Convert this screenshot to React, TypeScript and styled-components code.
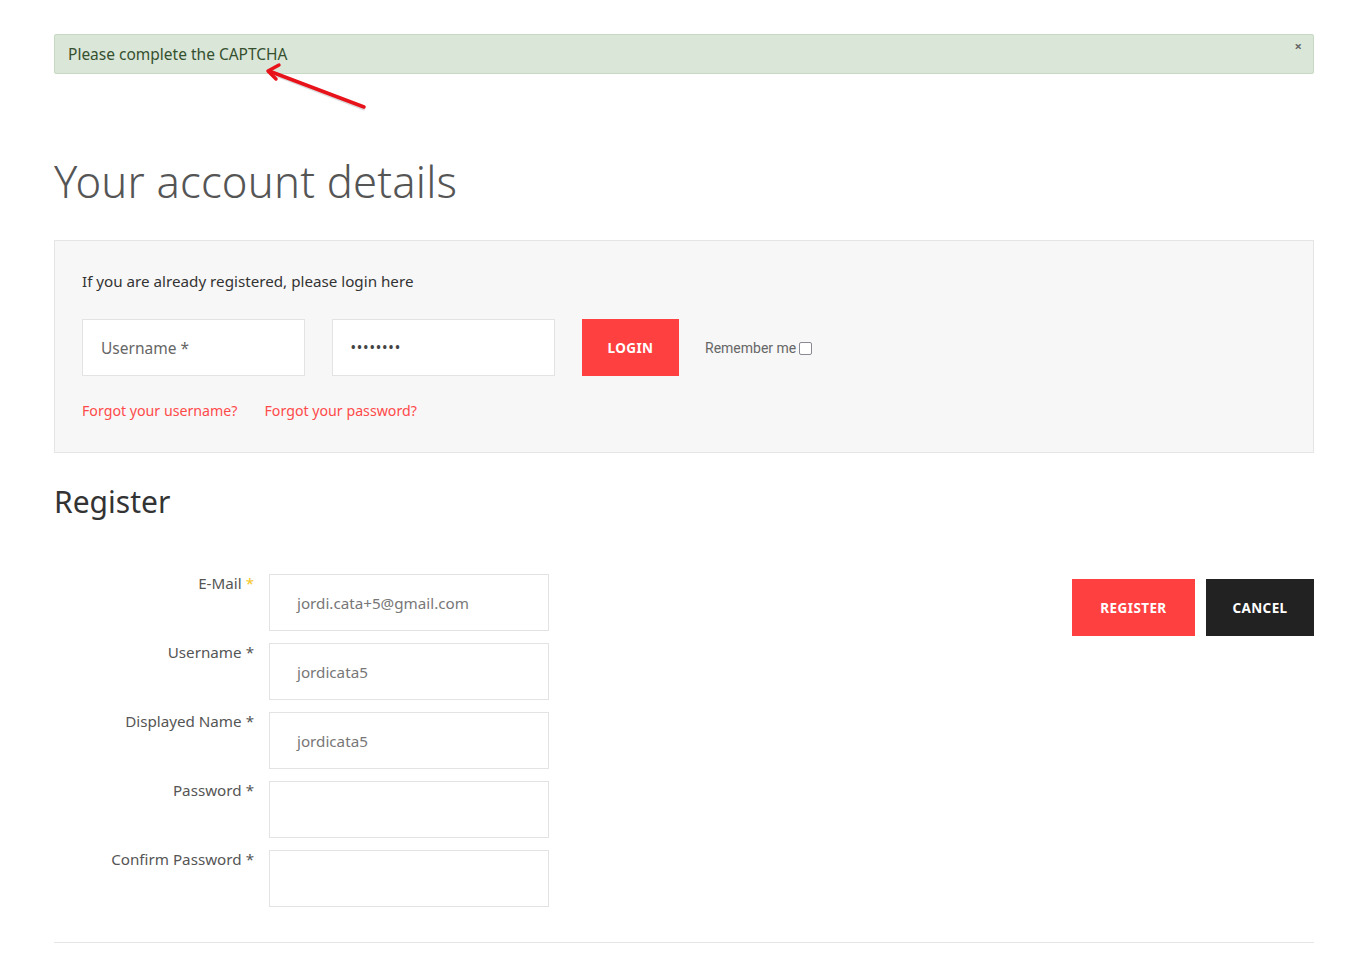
import React from 'react'
import styled, { createGlobalStyle } from 'styled-components'

const GlobalStyle = createGlobalStyle`
  html, body {
    margin: 0;
    padding: 0;
    background: #fff;
  }
  body {
    font-family: "Noto Sans", "Open Sans", sans-serif;
    color: #333;
  }
`

const Page = styled.div`
  width: 1260px;
  margin: 0 0 0 54px;
  padding-top: 34px;
  padding-bottom: 21px;
`

const Alert = styled.div`
  position: relative;
  height: 40px;
  box-sizing: border-box;
  display: flex;
  align-items: center;
  padding: 0 13px;
  background: #dae6d8;
  border: 1px solid #c6d9c3;
  border-radius: 2px;
  color: #35502f;
  font-size: 15.5px;
`

const Close = styled.span`
  position: absolute;
  top: 4px;
  right: 11px;
  font-size: 13px;
  font-weight: 700;
  color: #666;
  line-height: 14px;
`

const Arrow = styled.svg`
  position: absolute;
  left: 205px;
  top: 33px;
  overflow: visible;
`

const Title = styled.h1`
  margin: 79px 0 31px;
  font-size: 43.6px;
  font-weight: 300;
  color: #555;
  line-height: 56px;
  letter-spacing: 0.2px;
`

const LoginBox = styled.div`
  background: #f7f7f7;
  border: 1px solid #e5e5e5;
  padding: 28px 27px 32px;
`

const Intro = styled.p`
  margin: 0 0 26px;
  font-size: 15.2px;
  color: #333;
  line-height: 24px;
`

const LoginRow = styled.div`
  display: flex;
  align-items: center;
  gap: 27px;
`

const Field = styled.div<{ $w: number }>`
  width: ${p => p.$w}px;
  height: 57px;
  box-sizing: border-box;
  background: #fff;
  border: 1px solid #e3e3e3;
  display: flex;
  align-items: center;
  padding: 0 18px;
  font-size: 15.5px;
  color: #666;
`

const Dots = styled.span`
  letter-spacing: 1.8px;
  font-size: 12px;
  color: #444;
  font-weight: 700;
`

const Button = styled.button<{ $dark?: boolean; $w: number }>`
  width: ${p => p.$w}px;
  height: 57px;
  border: none;
  background: ${p => (p.$dark ? '#222' : '#ff4040')};
  color: #fff;
  font-family: "Noto Sans", sans-serif;
  font-weight: 700;
  font-size: 13.5px;
  letter-spacing: 0.4px;
  text-transform: uppercase;
  padding: 0;
`

const Remember = styled.label`
  display: flex;
  align-items: center;
  gap: 3px;
  font-family: Roboto, sans-serif;
  font-size: 14px;
  color: #666;
  margin-left: -1px;
`

const Check = styled.span`
  width: 11px;
  height: 11px;
  border: 1.5px solid #8a8a94;
  border-radius: 2px;
  background: #fff;
  margin-top: 1px;
`

const Links = styled.div`
  display: flex;
  gap: 27px;
  margin-top: 25px;
`

const Link = styled.a`
  color: #ff4a4a;
  font-size: 14.2px;
  text-decoration: none;
`

const SubTitle = styled.h2`
  margin: 29px 0 52px;
  font-size: 30px;
  font-weight: 400;
  color: #333;
  line-height: 40px;
`

const RegisterArea = styled.div`
  display: flex;
  justify-content: space-between;
  align-items: flex-start;
`

const Form = styled.div`
  display: grid;
  grid-template-columns: 200px 280px;
  column-gap: 15px;
  row-gap: 12px;
`

const Label = styled.div`
  text-align: right;
  font-size: 15.2px;
  color: #555;
  line-height: 18px;
`

const Star = styled.span<{ $gold?: boolean }>`
  color: ${p => (p.$gold ? '#f5c623' : '#555')};
  margin-left: 4px;
`

const Input = styled.div`
  height: 57px;
  box-sizing: border-box;
  border: 1px solid #e3e3e3;
  display: flex;
  align-items: center;
  padding: 0 27px;
  font-size: 15.2px;
  color: #777;
`

const Actions = styled.div`
  display: flex;
  gap: 11px;
  margin-top: 5px;
`

const Rule = styled.hr`
  margin: 35px 0 0;
  border: none;
  border-top: 1px solid #e5e5e5;
`

const Wrap = styled.div`
  position: relative;
`

const fields = [
  { label: 'E-Mail', value: 'jordi.cata+5@gmail.com', gold: true },
  { label: 'Username', value: 'jordicata5' },
  { label: 'Displayed Name', value: 'jordicata5' },
  { label: 'Password', value: '' },
  { label: 'Confirm Password', value: '' },
]

export default function App() {
  return (
    <>
      <GlobalStyle />
      <Page>
        <Wrap>
          <Alert>
            Please complete the CAPTCHA
            <Close>×</Close>
          </Alert>
          <Arrow width="110" height="45" viewBox="0 0 110 45">
            <line x1="106" y1="42" x2="12" y2="6" stroke="#999" strokeWidth="3.5" opacity="0.35" />
            <line x1="105" y1="40" x2="10" y2="4" stroke="#e8121a" strokeWidth="3.5" strokeLinecap="round" />
            <polyline points="20,-2 9,4 17,12" fill="none" stroke="#e8121a" strokeWidth="3.5" strokeLinecap="round" strokeLinejoin="round" />
          </Arrow>
        </Wrap>

        <Title>Your account details</Title>

        <LoginBox>
          <Intro>If you are already registered, please login here</Intro>
          <LoginRow>
            <Field $w={223}>Username *</Field>
            <Field $w={223}>
              <Dots>••••••••</Dots>
            </Field>
            <Button $w={97}>Login</Button>
            <Remember>
              Remember me <Check />
            </Remember>
          </LoginRow>
          <Links>
            <Link href="#">Forgot your username?</Link>
            <Link href="#">Forgot your password?</Link>
          </Links>
        </LoginBox>

        <SubTitle>Register</SubTitle>

        <RegisterArea>
          <Form>
            {fields.map(f => (
              <React.Fragment key={f.label}>
                <Label>
                  {f.label}
                  <Star $gold={f.gold}>*</Star>
                </Label>
                <Input>{f.value}</Input>
              </React.Fragment>
            ))}
          </Form>
          <Actions>
            <Button $w={123}>Register</Button>
            <Button $w={108} $dark>Cancel</Button>
          </Actions>
        </RegisterArea>

        <Rule />
      </Page>
    </>
  )
}
